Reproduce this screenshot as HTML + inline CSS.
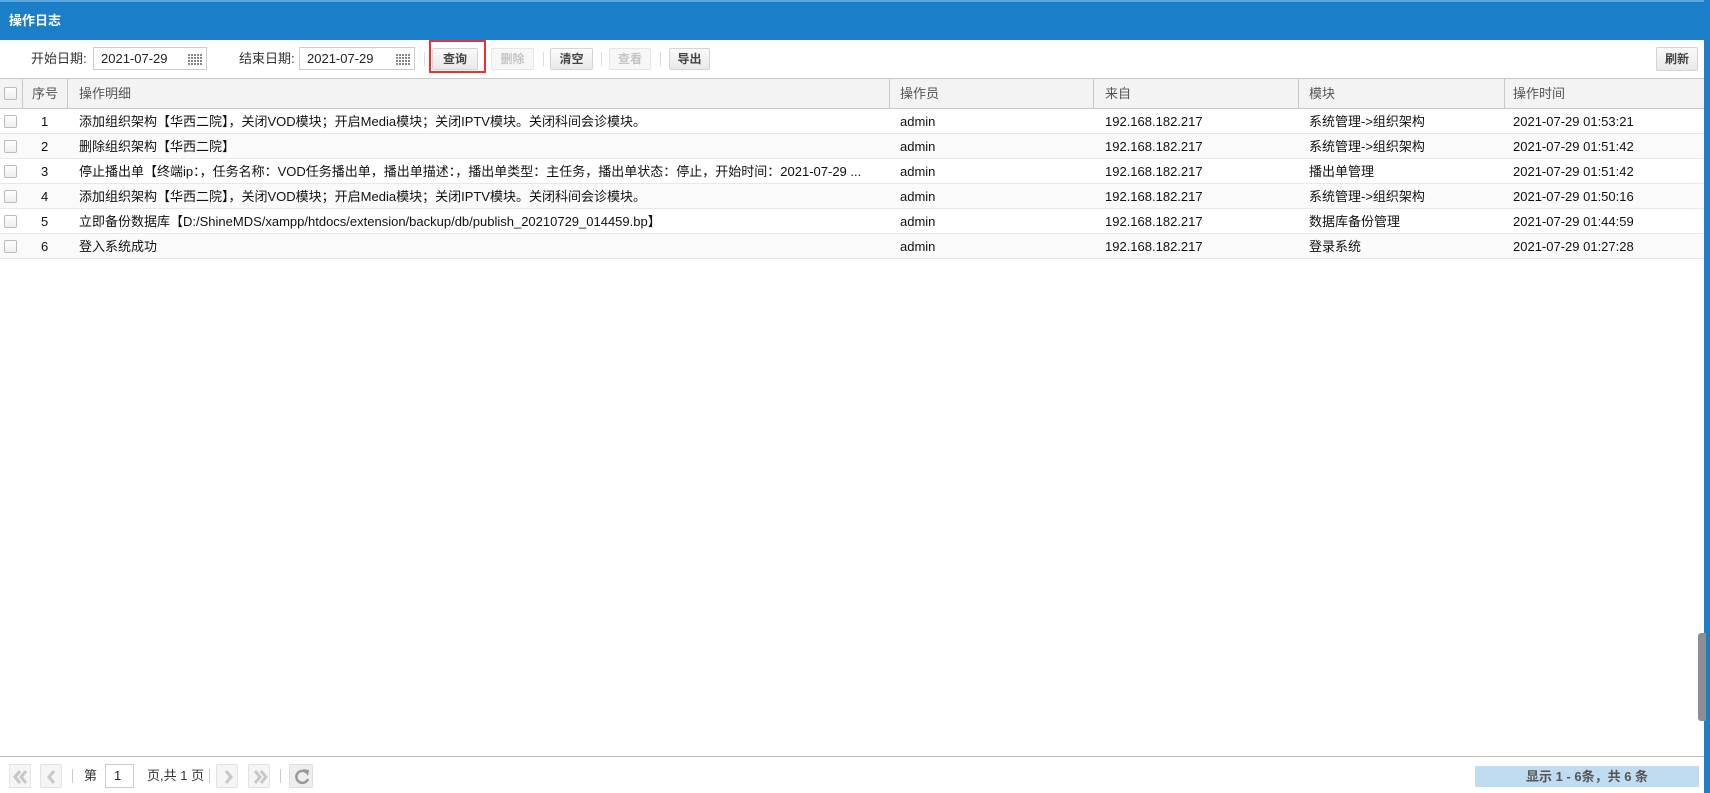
<!DOCTYPE html>
<html><head><meta charset="utf-8"><style>
*{margin:0;padding:0;box-sizing:border-box}
body{width:1710px;height:793px;position:relative;overflow:hidden;background:#fff;font-family:"Liberation Sans","Noto Sans CJK SC",sans-serif;font-size:13px;color:#222}
.a{position:absolute}
.title{left:0;top:0;width:1710px;height:40px;background:#1a7ec9;border-top:2px solid #5aa6df;color:#fff;font-weight:bold;font-size:13px;line-height:38px;padding-left:9px}
.rb{left:1704px;top:0;width:6px;height:793px;background:#1a7ec9}
.lbl{top:47px;line-height:23px;color:#333}
.inp{top:47px;height:23px;border:1px solid #ccc;line-height:21px;padding-left:7px;color:#222}
.cal{position:absolute;right:4px;top:5px;width:14px;height:12px;background:repeating-linear-gradient(90deg,#888 0 2px,transparent 2px 3px),#fff;-webkit-mask:repeating-linear-gradient(0deg,#000 0 2px,transparent 2px 3px)}
.btn{top:48px;height:22px;border:1px solid #d4d4d4;border-radius:2px;background:linear-gradient(#fafafa,#e9e9e9);text-align:center;line-height:20px;color:#444;font-size:12px;font-weight:bold}
.dis{color:#c4c4c4;background:#f7f7f7;border-color:#e6e6e6}
.sep{top:52px;width:1px;height:14px;background:#ddd}
.hdr{left:0;top:78px;width:1704px;height:31px;background:#f3f3f3;border-top:1px solid #c8c8c8;border-bottom:1px solid #c8c8c8}
.vl{top:78px;width:1px;height:31px;background:#c8c8c8}
.h{top:78px;line-height:31px;color:#555}
.row{left:0;width:1704px;height:25px;border-bottom:1px solid #e8e8e8}
.c{line-height:25px;white-space:nowrap;color:#111}
.cb{left:4px;width:13px;height:13px;border:1px solid #bbb;border-radius:2px;background:linear-gradient(#fff,#eee)}
.pb{top:764px;width:22px;height:24px;border:1px solid #e3e3e3;border-radius:2px;background:#f5f5f5}
.pb svg{position:absolute;left:0;top:0}
</style></head><body>
<div class="a title">操作日志</div>
<div class="a rb"></div>

<div class="a lbl" style="left:31px">开始日期:</div>
<div class="a inp" style="left:93px;width:114px">2021-07-29<span class="cal"></span></div>
<div class="a lbl" style="left:239px">结束日期:</div>
<div class="a inp" style="left:299px;width:116px">2021-07-29<span class="cal"></span></div>
<div class="a sep" style="left:424px"></div>
<div class="a btn" style="left:432px;width:46px">查询</div>
<div class="a" style="left:429px;top:40px;width:57px;height:33px;border:2px solid #f03030"></div>
<div class="a btn dis" style="left:491px;width:43px">删除</div>
<div class="a sep" style="left:543px"></div>
<div class="a btn" style="left:550px;width:43px">清空</div>
<div class="a sep" style="left:601px"></div>
<div class="a btn dis" style="left:609px;width:42px">查看</div>
<div class="a sep" style="left:660px"></div>
<div class="a btn" style="left:669px;width:41px">导出</div>
<div class="a btn" style="left:1656px;width:42px;top:47px;height:24px;line-height:22px">刷新</div>

<div class="a hdr"></div>
<div class="a cb" style="top:87px"></div>
<div class="a vl" style="left:22px"></div><div class="a vl" style="left:67px"></div><div class="a vl" style="left:889px"></div><div class="a vl" style="left:1093px"></div><div class="a vl" style="left:1298px"></div><div class="a vl" style="left:1504px"></div>
<div class="a h" style="left:32px">序号</div>
<div class="a h" style="left:79px">操作明细</div>
<div class="a h" style="left:900px">操作员</div>
<div class="a h" style="left:1105px">来自</div>
<div class="a h" style="left:1309px">模块</div>
<div class="a h" style="left:1513px">操作时间</div>

<div class="a row" style="top:109px"></div>
<div class="a row" style="top:134px;background:#fafafa"></div>
<div class="a row" style="top:159px"></div>
<div class="a row" style="top:184px;background:#fafafa"></div>
<div class="a row" style="top:209px"></div>
<div class="a row" style="top:234px;background:#fafafa"></div>

<div class="a cb" style="top:115px"></div><div class="a c" style="top:109px;left:41px">1</div><div class="a c" style="top:109px;left:79px">添加组织架构【华西二院】，关闭VOD模块；开启Media模块；关闭IPTV模块。关闭科间会诊模块。</div><div class="a c" style="top:109px;left:900px">admin</div><div class="a c" style="top:109px;left:1105px">192.168.182.217</div><div class="a c" style="top:109px;left:1309px">系统管理-&gt;组织架构</div><div class="a c" style="top:109px;left:1513px">2021-07-29 01:53:21</div>
<div class="a cb" style="top:140px"></div><div class="a c" style="top:134px;left:41px">2</div><div class="a c" style="top:134px;left:79px">删除组织架构【华西二院】</div><div class="a c" style="top:134px;left:900px">admin</div><div class="a c" style="top:134px;left:1105px">192.168.182.217</div><div class="a c" style="top:134px;left:1309px">系统管理-&gt;组织架构</div><div class="a c" style="top:134px;left:1513px">2021-07-29 01:51:42</div>
<div class="a cb" style="top:165px"></div><div class="a c" style="top:159px;left:41px">3</div><div class="a c" style="top:159px;left:79px">停止播出单【终端ip：，任务名称：VOD任务播出单，播出单描述：，播出单类型：主任务，播出单状态：停止，开始时间：2021-07-29 ...</div><div class="a c" style="top:159px;left:900px">admin</div><div class="a c" style="top:159px;left:1105px">192.168.182.217</div><div class="a c" style="top:159px;left:1309px">播出单管理</div><div class="a c" style="top:159px;left:1513px">2021-07-29 01:51:42</div>
<div class="a cb" style="top:190px"></div><div class="a c" style="top:184px;left:41px">4</div><div class="a c" style="top:184px;left:79px">添加组织架构【华西二院】，关闭VOD模块；开启Media模块；关闭IPTV模块。关闭科间会诊模块。</div><div class="a c" style="top:184px;left:900px">admin</div><div class="a c" style="top:184px;left:1105px">192.168.182.217</div><div class="a c" style="top:184px;left:1309px">系统管理-&gt;组织架构</div><div class="a c" style="top:184px;left:1513px">2021-07-29 01:50:16</div>
<div class="a cb" style="top:215px"></div><div class="a c" style="top:209px;left:41px">5</div><div class="a c" style="top:209px;left:79px">立即备份数据库【D:/ShineMDS/xampp/htdocs/extension/backup/db/publish_20210729_014459.bp】</div><div class="a c" style="top:209px;left:900px">admin</div><div class="a c" style="top:209px;left:1105px">192.168.182.217</div><div class="a c" style="top:209px;left:1309px">数据库备份管理</div><div class="a c" style="top:209px;left:1513px">2021-07-29 01:44:59</div>
<div class="a cb" style="top:240px"></div><div class="a c" style="top:234px;left:41px">6</div><div class="a c" style="top:234px;left:79px">登入系统成功</div><div class="a c" style="top:234px;left:900px">admin</div><div class="a c" style="top:234px;left:1105px">192.168.182.217</div><div class="a c" style="top:234px;left:1309px">登录系统</div><div class="a c" style="top:234px;left:1513px">2021-07-29 01:27:28</div>

<div class="a" style="left:1698px;top:633px;width:8px;height:88px;background:#8a9096;border-radius:3px 0 0 3px"></div>

<div class="a" style="left:0;top:756px;width:1704px;height:1px;background:#c0c0c0"></div>
<div class="a pb" style="left:9px"><svg width="22" height="24"><path d="M10 6L5 12L10 18M16 6L11 12L16 18" stroke="#c8c8c8" stroke-width="3" fill="none"/></svg></div>
<div class="a pb" style="left:40px"><svg width="22" height="24"><path d="M13 6L8 12L13 18" stroke="#c8c8c8" stroke-width="3" fill="none"/></svg></div>
<div class="a" style="left:72px;top:769px;width:1px;height:14px;background:#ccc"></div>
<div class="a" style="left:84px;top:764px;line-height:24px;color:#333">第</div>
<div class="a" style="left:105px;top:764px;width:29px;height:24px;border:1px solid #ccc;line-height:22px;padding-left:8px">1</div>
<div class="a" style="left:147px;top:764px;line-height:24px;color:#333">页,共 1 页</div>
<div class="a" style="left:209px;top:769px;width:1px;height:14px;background:#ccc"></div>
<div class="a pb" style="left:216px"><svg width="22" height="24"><path d="M9 6L14 12L9 18" stroke="#c8c8c8" stroke-width="3" fill="none"/></svg></div>
<div class="a pb" style="left:248px"><svg width="22" height="24"><path d="M6 6L11 12L6 18M12 6L17 12L12 18" stroke="#c8c8c8" stroke-width="3" fill="none"/></svg></div>
<div class="a" style="left:280px;top:769px;width:1px;height:14px;background:#ccc"></div>
<div class="a pb" style="left:289px;width:24px;background:#eee;border-color:#ddd"><svg width="24" height="24"><path d="M17 8A6 6 0 1 0 18 14" stroke="#999" stroke-width="2.5" fill="none"/><path d="M13 4L19 5L18 11Z" fill="#999"/></svg></div>
<div class="a" style="left:1475px;top:766px;width:224px;height:21px;background:#bfdcf1;color:#555;font-weight:bold;text-align:center;line-height:21px">显示 1 - 6条，共 6 条</div>
</body></html>
